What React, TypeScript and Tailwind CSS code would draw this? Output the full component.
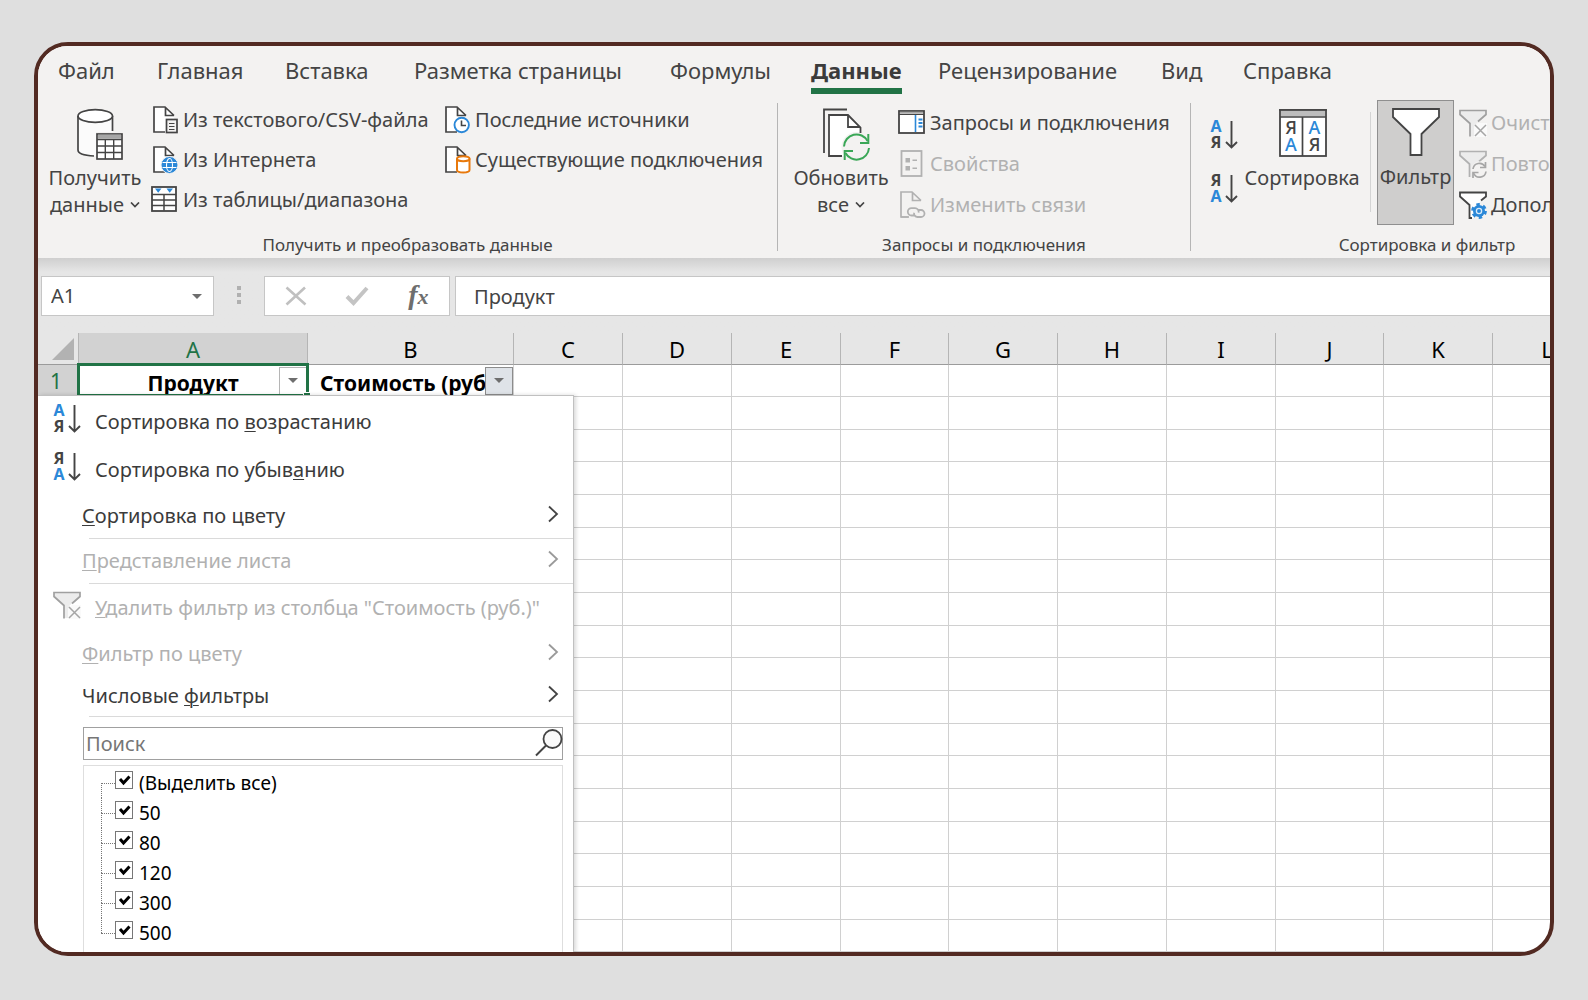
import type { ReactNode } from 'react'
import clsx from 'clsx'

const INK = '#444444'
const MUTED = '#b1b1b1'
const BLUE = '#2b88d8'

/* ---------- icons ---------- */

function SmallIcon({ children }: { children: ReactNode }) {
  return (
    <svg viewBox="0 0 28 28" className="h-7 w-7 shrink-0 overflow-visible" fill="none" aria-hidden="true">
      {children}
    </svg>
  )
}

function BigIcon({ children }: { children: ReactNode }) {
  return (
    <svg viewBox="0 0 56 52" className="h-[52px] w-14 shrink-0 overflow-visible" fill="none" aria-hidden="true">
      {children}
    </svg>
  )
}

function Page({ color = INK, fill = '#fff' }: { color?: string; fill?: string }) {
  return (
    <>
      <path d="M3 1H14L23 9.5V26H3Z" fill={fill} />
      <path d="M14 26H3V1H14L23 9.5M14.5 1.5V9.5H23" stroke={color} strokeWidth="1.7" />
    </>
  )
}

function TextFileIcon() {
  return (
    <SmallIcon>
      <Page />
      <rect x="15.5" y="13.5" width="10.5" height="13" fill="#f3f2f1" stroke={INK} strokeWidth="1.7" />
      <path d="M18 17.5h5.5M18 20.5h5.5M18 23.5h5.5" stroke={INK} strokeWidth="1.2" />
    </SmallIcon>
  )
}

function WebFileIcon() {
  return (
    <SmallIcon>
      <Page />
      <circle cx="18.5" cy="19" r="8.5" fill={BLUE} stroke="#f3f2f1" strokeWidth="1" />
      <ellipse cx="18.5" cy="19" rx="3" ry="6.5" stroke="#fff" strokeWidth="1.1" />
      <path d="M11.5 16.5h14M11.5 21.5h14" stroke="#fff" strokeWidth="1.1" />
    </SmallIcon>
  )
}

function RangeIcon() {
  return (
    <SmallIcon>
      <rect x="1" y="1" width="24" height="24" fill="#fff" stroke={INK} strokeWidth="1.8" />
      <path d="M1 8.5h24M1 14h24M1 19.5h24M13 8.5v16" stroke={INK} strokeWidth="1.5" />
      <path d="M4 2.5h6.500L7.200 6.800zM15.500 2.500H22l-3.300 4.300z" fill={BLUE} />
    </SmallIcon>
  )
}

function RecentIcon() {
  return (
    <SmallIcon>
      <Page />
      <circle cx="18.7" cy="19" r="7.2" fill="#fff" stroke={BLUE} strokeWidth="1.9" />
      <path d="M18.5 14.5V19.500H23" stroke={INK} strokeWidth="1.6" />
    </SmallIcon>
  )
}

function ConnectionIcon() {
  return (
    <SmallIcon>
      <Page />
      <path d="M14 12.5V24c0 3.300 12.500 3.300 12.500 0V12.500" fill="#fff" stroke="#e8790c" strokeWidth="2" />
      <ellipse cx="20.25" cy="12.7" rx="6.25" ry="2.5" fill="#fff" stroke="#e8790c" strokeWidth="2" />
    </SmallIcon>
  )
}

function PaneIcon() {
  return (
    <SmallIcon>
      <rect x="1" y="2" width="25" height="22" fill="#fff" stroke={INK} strokeWidth="1.8" />
      <path d="M2 3.8H25" stroke="#a6a6a6" strokeWidth="2" />
      <path d="M1 5.500H26" stroke={INK} strokeWidth="1.2" />
      <path d="M17.500 6v17" stroke={BLUE} strokeWidth="1.6" />
      <path d="M20.500 10.500h4M20.500 14h4M20.500 17.500h4" stroke={BLUE} strokeWidth="2.2" />
    </SmallIcon>
  )
}

function PropertiesIcon() {
  return (
    <SmallIcon>
      <rect x="3.5" y="1" width="20" height="25" stroke={MUTED} strokeWidth="1.8" />
      <path d="M7.5 8h4.500v4.500H7.500zM7.500 16h4.500v4.500H7.500z" fill={MUTED} />
      <path d="M14.500 10.300h4.500M14.500 18.300h4.500" stroke={MUTED} strokeWidth="1.5" />
    </SmallIcon>
  )
}

function LinksIcon() {
  return (
    <SmallIcon>
      <Page color={MUTED} fill="#f3f2f1" />
      <rect x="10.5" y="16" width="17" height="12" fill="#f3f2f1" />
      <path
        d="M17 24.500h-3.500a3.700 3.700 0 0 1 0-7.400h3.500a3.700 3.700 0 0 1 3.600 4.500M19.500 19h3.500a3.500 3.500 0 0 1 0 7h-3.500a3.500 3.500 0 0 1-3.400-4.300"
        stroke={MUTED}
        strokeWidth="1.8"
      />
      <path d="M3 26H11" stroke={MUTED} strokeWidth="1.7" />
    </SmallIcon>
  )
}

function ClearFilterIcon() {
  return (
    <SmallIcon>
      <path d="M1 1.500H27V5.500L16 15V27H11V14L1 5.500Z" fill="#ececec" />
      <path d="M15 28V17.500L19 14H28V28Z" fill="#fafafa" />
      <path d="M19 12.500L27 5.500V1.500H1V5.500L11 14.500V27.500" stroke="#a0a0a0" strokeWidth="1.7" />
      <path d="M16 16L27 27M27 16L16 27" stroke="#a6a6a6" strokeWidth="1.5" />
    </SmallIcon>
  )
}

function ReapplyIcon() {
  return (
    <SmallIcon>
      <path d="M1 1.500H27V5.500L16 15V27H11V14L1 5.500Z" fill="#ececec" />
      <path d="M20 11.500L27 5.500V1.500H1V5.500L10.500 14V27" stroke={MUTED} strokeWidth="1.7" />
      <circle cx="20.5" cy="20" r="8.5" fill="#f3f2f1" />
      <path d="M14 19a6.500 6.500 0 0 1 12-2.500M27 21.500A6.500 6.500 0 0 1 14.500 23" stroke="#a6a6a6" strokeWidth="1.7" />
      <path d="M26.500 12v5.500H21M14 28v-5.500H19.500" stroke="#a6a6a6" strokeWidth="1.7" />
    </SmallIcon>
  )
}

function AdvancedIcon() {
  return (
    <SmallIcon>
      <path d="M1 1.500H27V5.500L16 15V27H11V14L1 5.500Z" fill="#fff" />
      <path d="M22 9.500L27 5.500V1.500H1V5.500L10.500 14V27H13" stroke={INK} strokeWidth="1.8" />
      <circle cx="20" cy="20" r="6" fill={BLUE} />
      <circle cx="20" cy="20" r="6.3" stroke={BLUE} strokeWidth="3.2" strokeDasharray="3.3 3.3" />
      <circle cx="20" cy="20" r="2.6" stroke="#d8ebfa" strokeWidth="1.3" />
    </SmallIcon>
  )
}

function SortIcon({ letters }: { letters: string }) {
  return (
    <SmallIcon>
      {[...letters].map((letter, i) => (
        <text
          key={letter}
          x="6"
          y={i === 0 ? 11 : 27}
          textAnchor="middle"
          fontSize="16"
          fontWeight="700"
          fontFamily="Noto Sans, sans-serif"
          fill={letter === 'А' ? BLUE : INK}
        >
          {letter}
        </text>
      ))}
      <path d="M21.5 0V26M16 21L21.500 26.500L27 21" stroke={INK} strokeWidth="1.9" />
    </SmallIcon>
  )
}

function DatabaseIcon() {
  return (
    <BigIcon>
      <path d="M11 8V42c0 4 8 6 18 6V24h16.500V8Z" fill="#fbfbfb" />
      <path d="M11 8V42c0 3.500 6 5.500 16 6M45.500 8V23" stroke={INK} strokeWidth="1.700" />
      <ellipse cx="28.25" cy="8" rx="17.25" ry="6.3" fill="#fff" stroke={INK} strokeWidth="1.7" />
      <rect x="30" y="26" width="25" height="25" fill="#fff" stroke={INK} strokeWidth="1.7" />
      <path d="M31 28.500H54" stroke="#a6a6a6" strokeWidth="4" />
      <path d="M30 31.500H55M30 38H55M30 44.500H55M38.300 31V51M46.700 31V51" stroke={INK} strokeWidth="1.4" />
    </BigIcon>
  )
}

function RefreshIcon() {
  return (
    <BigIcon>
      <path d="M34 1.500H11V45" stroke={INK} strokeWidth="1.8" />
      <path d="M16 7H35L47.500 19.500V48H16Z" fill="#fff" />
      <circle cx="43.5" cy="39" r="15" fill="#f3f2f1" />
      <path d="M29 48H16V7H35L47.500 19.500V25M35 7.500V19H47.500" stroke={INK} strokeWidth="1.8" />
      <path d="M31 38.500A12.500 12.500 0 0 1 54.500 33M56 40A12.500 12.500 0 0 1 32.500 45" stroke="#3aa757" strokeWidth="2" />
      <path d="M55.300 26V35H47M31.700 52V43H40" stroke="#3aa757" strokeWidth="2" />
    </BigIcon>
  )
}

function SortTableIcon() {
  return (
    <BigIcon>
      <rect x="6" y="2" width="46" height="46" fill="#fff" stroke={INK} strokeWidth="1.8" />
      <path d="M7 5.500H51" stroke="#bdbdbd" strokeWidth="6" />
      <path d="M5 2H53M6 9H52M28.500 9V48" stroke={INK} strokeWidth="1.7" />
      <g fontSize="18" fontFamily="Noto Sans, sans-serif" fontWeight="500" textAnchor="middle">
        <text x="17" y="26" fill={INK}>Я</text>
        <text x="17" y="43" fill={BLUE}>А</text>
        <text x="40.500" y="26" fill={BLUE}>А</text>
        <text x="40.500" y="43" fill={INK}>Я</text>
      </g>
    </BigIcon>
  )
}

function FilterIcon() {
  return (
    <BigIcon>
      <path d="M5 2H51V10L33.500 27V48H22.500V27L5 10Z" fill="#fff" stroke={INK} strokeWidth="1.8" />
    </BigIcon>
  )
}

function CaretDown() {
  return (
    <svg viewBox="0 0 10 6" className="mb-1 ml-1.5 inline h-1.5 w-2.5 align-middle" fill="none" aria-hidden="true">
      <path d="M1 .5L5 4.500L9 .5" stroke={INK} strokeWidth="1.700" />
    </svg>
  )
}

function Triangle({ className }: { className?: string }) {
  return (
    <svg viewBox="0 0 10 5" className={clsx('h-[5px] w-2.5', className)} aria-hidden="true">
      <path d="M0 0H10L5 5Z" fill="#6e6e6e" />
    </svg>
  )
}

/* ---------- ribbon ---------- */

const TABS = ['Файл', 'Главная', 'Вставка', 'Разметка страницы', 'Формулы', 'Данные', 'Рецензирование', 'Вид', 'Справка']

function Tabs() {
  return (
    <nav className="grid h-12 grid-cols-[99px_128px_129px_256px_141px_127px_223px_82px_auto] justify-start pl-5">
      {TABS.map((tab) => (
        <button
          key={tab}
          type="button"
          className={clsx(
            'justify-self-start border-b-[6px] pt-1.5 text-[22px] leading-8 whitespace-nowrap',
            tab === 'Данные' ? 'border-[#217346] font-bold text-[#3b3b3b]' : 'border-transparent',
          )}
        >
          {tab}
        </button>
      ))}
    </nav>
  )
}

interface CommandProps {
  icon: ReactNode
  label: string
  disabled?: boolean
  tall?: boolean
}

function Command({ icon, label, disabled, tall }: CommandProps) {
  return (
    <button
      type="button"
      disabled={disabled}
      className={clsx(
        'flex items-center gap-1 text-left whitespace-nowrap disabled:text-[#b1b1b1]',
        tall ? 'h-[41px]' : 'h-10',
      )}
    >
      {icon}
      {label}
    </button>
  )
}

function BigCommand({ icon, children, className }: { icon: ReactNode; children: ReactNode; className?: string }) {
  return (
    <button
      type="button"
      className={clsx('flex shrink-0 flex-col items-center gap-1 leading-[27px] whitespace-nowrap', className)}
    >
      {icon}
      <span>{children}</span>
    </button>
  )
}

function Group({ label, className, children }: { label: string; className?: string; children: ReactNode }) {
  return (
    <section className={clsx('shrink-0', className)}>
      <div className="flex h-[134px] items-start">{children}</div>
      <h2 className="h-6 text-center text-[17px] leading-[22px]">{label}</h2>
    </section>
  )
}

function GroupDivider() {
  return <div className="mt-[3px] mb-[7px] w-px shrink-0 bg-[#b5b5b5]" />
}

function Ribbon() {
  return (
    <header className="overflow-hidden bg-[#f3f2f1] text-[20px] text-[#444]">
      <Tabs />
      <div className="flex pt-1.5">
        <Group label="Получить и преобразовать данные" className="w-[739px]">
          <BigCommand icon={<DatabaseIcon />} className="ml-[9px] w-24 pt-2">
            Получить
            <br />
            данные
            <CaretDown />
          </BigCommand>
          <div className="ml-2 flex w-[292px] flex-col">
            <Command icon={<TextFileIcon />} label="Из текстового/CSV-файла" />
            <Command icon={<WebFileIcon />} label="Из Интернета" />
            <Command icon={<RangeIcon />} label="Из таблицы/диапазона" />
          </div>
          <div className="flex flex-col">
            <Command icon={<RecentIcon />} label="Последние источники" />
            <Command icon={<ConnectionIcon />} label="Существующие подключения" />
          </div>
        </Group>
        <GroupDivider />
        <Group label="Запросы и подключения" className="w-[412px]">
          <BigCommand icon={<RefreshIcon />} className="ml-[15px] w-24 pt-2">
            Обновить
            <br />
            все
            <CaretDown />
          </BigCommand>
          <div className="ml-[9px] flex flex-col pt-0.5">
            <Command tall icon={<PaneIcon />} label="Запросы и подключения" />
            <Command tall disabled icon={<PropertiesIcon />} label="Свойства" />
            <Command tall disabled icon={<LinksIcon />} label="Изменить связи" />
          </div>
        </Group>
        <GroupDivider />
        <Group label="Сортировка и фильтр" className="w-[472px]">
          <div className="ml-[19px] flex flex-col pt-2">
            <button type="button" aria-label="Сортировка от А до Я" className="flex h-[54px] items-center">
              <SortIcon letters="АЯ" />
            </button>
            <button type="button" aria-label="Сортировка от Я до А" className="flex h-[54px] items-center">
              <SortIcon letters="ЯА" />
            </button>
          </div>
          <BigCommand icon={<SortTableIcon />} className="ml-1 w-[120px] pt-2">
            Сортировка
          </BigCommand>
          <div className="mt-3 ml-2 h-[100px] w-px bg-[#d4d4d4]" />
          <BigCommand icon={<FilterIcon />} className="ml-1.5 h-[125px] w-[77px] border border-[#8f8f8f] bg-[#cfcecd] pt-1.5">
            Фильтр
          </BigCommand>
          <div className="ml-[5px] flex flex-col pt-0.5">
            <Command tall disabled icon={<ClearFilterIcon />} label="Очистить" />
            <Command tall disabled icon={<ReapplyIcon />} label="Повторить" />
            <Command tall icon={<AdvancedIcon />} label="Дополнительно" />
          </div>
        </Group>
      </div>
    </header>
  )
}

/* ---------- formula bar ---------- */

function FormulaBar() {
  return (
    <div className="flex h-[75px] items-start bg-[#e6e6e6] bg-linear-to-b from-[#cfcfcf] to-[#e6e6e6] to-[14px] pt-[18px] pl-[3px] text-[20px] text-[#444]">
      <div className="relative">
        <select
          aria-label="Поле имени"
          className="h-10 w-[173px] appearance-none border border-[#c6c6c6] bg-white px-[9px]"
        >
          <option>A1</option>
        </select>
        <Triangle className="pointer-events-none absolute top-[18px] right-3" />
      </div>
      <svg viewBox="0 0 4 20" className="mx-[23px] mt-2.5 h-5 w-1" aria-hidden="true">
        <path d="M0 0h4v4H0zM0 7h4v4H0zM0 14h4v4H0z" fill="#b0b0b0" />
      </svg>
      <div className="mr-[5px] grid h-10 w-[186px] shrink-0 grid-cols-3 place-items-center border border-[#c6c6c6] bg-white">
        <button type="button" aria-label="Отмена">
          <svg viewBox="0 0 22 20" className="h-5 w-[22px]" fill="none">
            <path d="M1.500 1.500L20.500 18.500M20 1.500L1.500 18.500" stroke="#c0c0c0" strokeWidth="2.600" />
          </svg>
        </button>
        <button type="button" aria-label="Ввод">
          <svg viewBox="0 0 24 20" className="h-5 w-6" fill="none">
            <path d="M2 10.500L8.500 17L22 2" stroke="#c4c4c4" strokeWidth="4" />
          </svg>
        </button>
        <button
          type="button"
          aria-label="Вставить функцию"
          className="font-['Liberation_Serif',serif] text-[28px] leading-8 font-bold text-[#6e6e6e] italic"
        >
          f<span className="text-[22px]">x</span>
        </button>
      </div>
      <input
        aria-label="Строка формул"
        defaultValue="Продукт"
        className="h-10 min-w-0 flex-1 border border-r-0 border-[#c6c6c6] bg-white px-[18px]"
      />
    </div>
  )
}

/* ---------- sheet ---------- */

const COLUMNS = [
  { name: 'A', width: 229 },
  { name: 'B', width: 206 },
  { name: 'C', width: 109 },
  { name: 'D', width: 109 },
  { name: 'E', width: 109 },
  { name: 'F', width: 108 },
  { name: 'G', width: 109 },
  { name: 'H', width: 109 },
  { name: 'I', width: 109 },
  { name: 'J', width: 108 },
  { name: 'K', width: 109 },
  { name: 'L', width: 109 },
]

const EMPTY_ROWS = Array.from({ length: 17 }, (_, i) => i + 2)

function FilterButton({ label, active }: { label: string; active?: boolean }) {
  return (
    <button
      type="button"
      aria-label={label}
      className={clsx(
        'flex h-7 w-7 shrink-0 items-center justify-center border',
        active ? 'border-[#8c8c8c] bg-[#dfe3e8]' : 'border-[#b5b5b5] bg-white',
      )}
    >
      <Triangle />
    </button>
  )
}

function Sheet() {
  return (
    <table className="w-0 table-fixed border-separate border-spacing-0 text-[21px] leading-6 text-black">
      <colgroup>
        <col className="w-[41px]" />
        {COLUMNS.map(({ name, width }) => (
          <col key={name} style={{ width }} />
        ))}
      </colgroup>
      <thead>
        <tr className="h-8 bg-[#e6e6e6] text-[22px]">
          <th className="border-r border-b border-r-[#b5b5b5] border-b-[#9b9b9b] p-0">
            <svg viewBox="0 0 22 22" className="ml-3.5 h-[22px] w-[22px]" aria-hidden="true">
              <path d="M22 0V22H0Z" fill="#b2b2b2" />
            </svg>
          </th>
          {COLUMNS.map(({ name }) => (
            <th
              key={name}
              scope="col"
              className={clsx(
                'border-r border-b border-r-[#b5b5b5] border-b-[#9b9b9b] p-0 font-normal',
                name === 'A' && 'bg-[#d2d2d2] text-[#217346]',
              )}
            >
              {name}
            </th>
          ))}
        </tr>
      </thead>
      <tbody>
        <tr className="h-8">
          <th scope="row" className="border-r border-b border-[#b5b5b5] bg-[#d2d2d2] p-0 pr-1 font-normal text-[#217346]">
            1
          </th>
          <td className="relative border-r border-b border-[#d0d0d0] p-0">
            <div className="flex items-center pl-7 font-bold">
              <span className="flex-1 pt-1 text-center">Продукт</span>
              <FilterButton label="Фильтр: Продукт" />
            </div>
            <div className="pointer-events-none absolute -top-0.5 -right-0.5 -bottom-px -left-0.5 border-[3px] border-[#217346]" />
            <div className="pointer-events-none absolute -right-1 -bottom-1 h-2 w-2 border border-white bg-[#217346]" />
          </td>
          <td className="border-r border-b border-[#d0d0d0] p-0">
            <div className="flex items-center pl-3 font-bold">
              <span className="min-w-0 flex-1 overflow-hidden pt-1 whitespace-nowrap">Стоимость (руб.)</span>
              <FilterButton active label="Фильтр: Стоимость (руб.)" />
            </div>
          </td>
          {COLUMNS.slice(2).map(({ name }) => (
            <td key={name} className="border-r border-b border-[#d0d0d0] p-0" />
          ))}
        </tr>
        {EMPTY_ROWS.map((row) => (
          <tr key={row} className={row % 3 === 0 ? 'h-8' : 'h-[33px]'}>
            <th className="border-r border-b border-[#d0d0d0] p-0" />
            {COLUMNS.map(({ name }) => (
              <td key={name} className="border-r border-b border-[#d0d0d0] p-0" />
            ))}
          </tr>
        ))}
      </tbody>
    </table>
  )
}

/* ---------- filter menu ---------- */

interface MenuItemProps {
  icon?: ReactNode
  children: ReactNode
  disabled?: boolean
  submenu?: boolean
  className: string
}

function MenuItem({ icon, children, disabled, submenu, className }: MenuItemProps) {
  return (
    <button
      type="button"
      role="menuitem"
      disabled={disabled}
      className={clsx(
        'flex w-full items-center pr-3.5 text-left whitespace-nowrap disabled:text-[#b1b1b1]',
        icon ? 'gap-3.5 pl-[15px]' : 'pl-11',
        className,
      )}
    >
      {icon && <span className="mb-1.5">{icon}</span>}
      <span className="flex-1">{children}</span>
      {submenu && (
        <svg viewBox="0 0 12 18" className="mb-1 h-[18px] w-3" fill="none" aria-hidden="true">
          <path d="M2 1.500L10 9L2 16.500" stroke={disabled ? '#9a9a9a' : INK} strokeWidth="1.800" />
        </svg>
      )}
    </button>
  )
}

function Key({ children }: { children: ReactNode }) {
  return <span className="underline decoration-1 underline-offset-2">{children}</span>
}

function Separator() {
  return <hr className="ml-[51px] border-[#dadada]" />
}

const VALUES = ['(Выделить все)', '50', '80', '120', '300', '500']

function ValueList() {
  return (
    <ul className="mt-[5px] mr-2.5 ml-[45px] flex-1 border border-b-0 border-[#dedede] pt-0.5 pl-[17px] text-[19px] text-black">
      {VALUES.map((value, i) => (
        <li key={value} className="flex h-[30px]">
          {/* dotted branch of the tree */}
          <div className="flex w-3.5 flex-col">
            <div className={clsx('h-[15px] border-dotted border-[#777]', i > 0 && 'border-l')} />
            <div
              className={clsx(
                'h-[15px] border-t border-dotted border-[#777]',
                i < VALUES.length - 1 && 'border-l',
              )}
            />
          </div>
          <label className="flex items-center gap-1.5 leading-[30px]">
            <span className="relative mb-1.5 h-[18px] w-[18px]">
              <input
                type="checkbox"
                defaultChecked
                className="peer block h-[18px] w-[18px] appearance-none border border-[#777] bg-white"
              />
              <svg
                viewBox="0 0 18 18"
                className="pointer-events-none absolute inset-0 hidden h-[18px] w-[18px] peer-checked:block"
                fill="none"
                aria-hidden="true"
              >
                <path d="M5 8L8.500 12L14.500 5.500" stroke="#000" strokeWidth="3" />
              </svg>
            </span>
            {value}
          </label>
        </li>
      ))}
    </ul>
  )
}

function FilterMenu() {
  return (
    <div
      role="menu"
      className="absolute top-[62px] bottom-0 left-0 flex w-[536px] flex-col border-t border-r border-[#c0c0c0] bg-white pt-0.5 text-[20px] text-[#3b3b3b] shadow-[2px_0_4px_rgba(0,0,0,0.15)]"
    >
      <MenuItem icon={<SortIcon letters="АЯ" />} className="h-12">
        Сортировка по <Key>в</Key>озрастанию
      </MenuItem>
      <MenuItem icon={<SortIcon letters="ЯА" />} className="h-12">
        Сортировка по убыв<Key>а</Key>нию
      </MenuItem>
      <MenuItem submenu className="h-11">
        <Key>С</Key>ортировка по цвету
      </MenuItem>
      <Separator />
      <MenuItem submenu disabled className="h-11">
        <Key>П</Key>редставление листа
      </MenuItem>
      <Separator />
      <MenuItem disabled icon={<ClearFilterIcon />} className="h-12">
        <Key>У</Key>далить фильтр из столбца "Стоимость (руб.)"
      </MenuItem>
      <MenuItem submenu disabled className="h-11">
        <Key>Ф</Key>ильтр по цвету
      </MenuItem>
      <MenuItem submenu className="h-10">
        Числовые <Key>ф</Key>ильтры
      </MenuItem>
      <Separator />
      <div className="relative mt-2.5 mr-2.5 ml-[45px]">
        <input
          type="text"
          aria-label="Поиск"
          placeholder="Поиск"
          className="block h-[33px] w-full border border-[#a0a0a0] pr-9 pl-0.5 placeholder:text-[#767676]"
        />
        <svg viewBox="0 0 28 28" className="absolute top-0.5 right-0 h-7 w-7" fill="none" aria-hidden="true">
          <circle cx="17.5" cy="10" r="9" fill="#fafafa" stroke={INK} strokeWidth="1.8" />
          <path d="M11 16.500L1 26.500" stroke={INK} strokeWidth="2" />
        </svg>
      </div>
      <ValueList />
    </div>
  )
}

export default function App() {
  return (
    <div className="min-h-screen bg-[#dfdfdf] px-[34px] pt-[42px] pb-11 font-['Noto_Sans',sans-serif]">
      <main className="overflow-hidden rounded-[34px] border-4 border-[#522a22] bg-white">
        <Ribbon />
        <FormulaBar />
        <div className="relative overflow-hidden">
          <Sheet />
          <FilterMenu />
        </div>
      </main>
    </div>
  )
}
